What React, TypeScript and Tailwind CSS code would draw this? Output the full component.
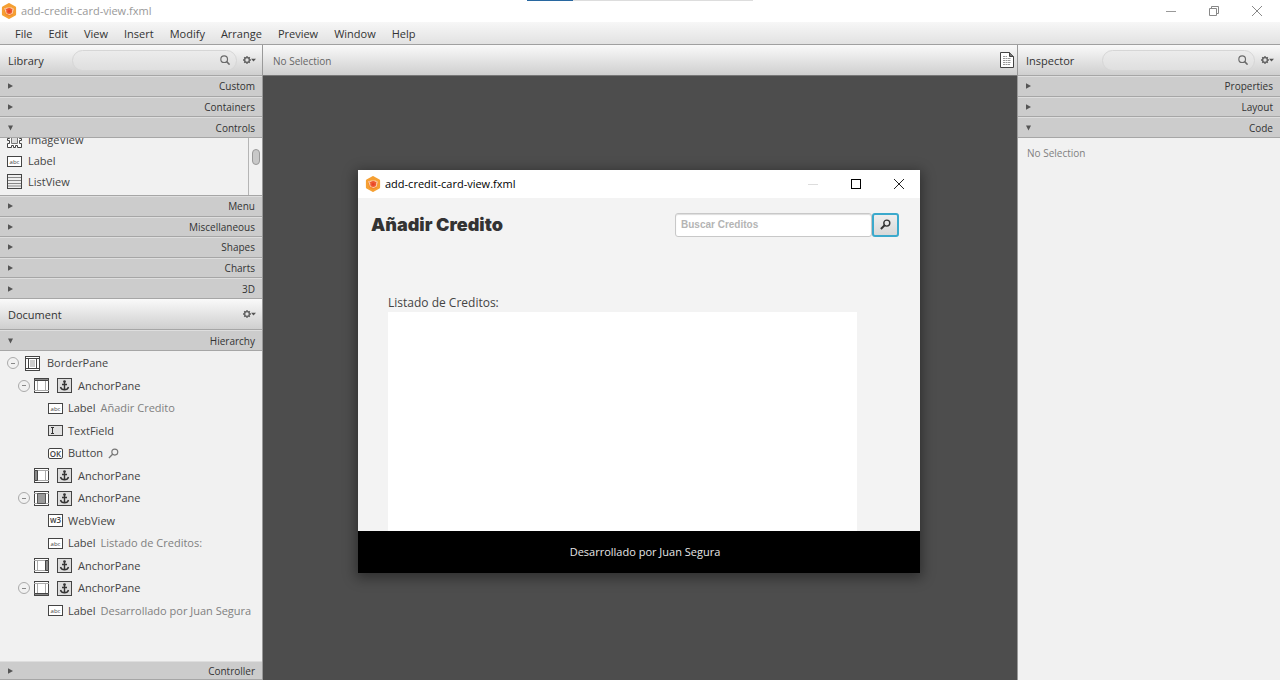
import React from "react";

const Logo = () => (
  <svg width="16" height="16" viewBox="0 0 16 16" aria-hidden="true" className="shrink-0">
    <path d="M8 1.200 13.900 4.500v7L8 14.800 2.100 11.500v-7Z" fill="#f5a033" stroke="#f5a033" strokeWidth="2.400" strokeLinejoin="round" />
    <path d="M3 7 8 4.500 13 7l-1.500 5L8 13.500 4.500 12Z" fill="#f58a2a" />
    <path d="M3.200 5.200 6.500 4.600h4l2.300 1.200-1 4.700L8.500 12 5 10.500Z" fill="#fccfae" />
    <circle cx="8.200" cy="8" r="3" fill="#ee5a30" />
    <path d="m4.500 6 2 .800M9.500 6.800l2-.600" stroke="#ee5a30" strokeWidth="1" />
    <circle cx="8.200" cy="8.200" r="1.200" fill="#e8402a" />
  </svg>
);

const SearchIcon = () => (
  <svg width="10" height="10" viewBox="0 0 12 12" fill="none" stroke="#6a6a6a" strokeWidth="1.4" aria-hidden="true" className="shrink-0">
    <circle cx="5" cy="5" r="4" />
    <path d="m8 8 3.500 3.500" strokeWidth="1.900" />
  </svg>
);

const GearMenu = ({ label }: { label: string }) => (
  <button type="button" aria-label={label} className="flex h-5 w-4 shrink-0 items-center justify-center">
    <svg width="13" height="10" viewBox="0 0 13 10" aria-hidden="true">
      <circle cx="4" cy="5" r="2.400" fill="none" stroke="#666" strokeWidth="1.500" />
      <path d="M4 1v1.500M4 7.500V9M0 5h1.500M6.500 5H8M1.200 2.200l1 1M5.800 6.800l1 1M6.800 2.200l-1 1M2.200 6.800l-1 1" stroke="#666" strokeWidth="1.300" />
      <path d="M8 3.800h5L10.500 6.500Z" fill="#555" />
    </svg>
  </button>
);

const KeyGlass = ({ dark = false }: { dark?: boolean }) => (
  <svg width="11" height="11" viewBox="0 0 11 11" fill="none" stroke={dark ? "#333" : "#777"} aria-hidden="true" className="shrink-0">
    <circle cx="6.800" cy="4.100" r="3" strokeWidth={dark ? 1.4 : 1.1} />
    <path d="M4.600 6.300.9 10" strokeWidth={dark ? 2 : 1.3} />
  </svg>
);

const Section = ({ title, open = false }: { title: string; open?: boolean }) => (
  <button
    type="button"
    aria-expanded={open}
    className="flex w-full items-center justify-between border-t border-b border-t-[#dedede] border-b-[#a6a6a6] bg-[#cccccc] pr-[7px] pl-2 text-[10px] leading-4 text-[#333]"
  >
    <svg width="5" height="6" viewBox="0 0 5 6" fill="#555" aria-hidden="true">
      {open ? <path d="M0 .500h5L2.500 5.500Z" /> : <path d="M0 .300v5.400L5 3Z" />}
    </svg>
    <span>{title}</span>
  </button>
);

const PanelHeader = ({ title, search }: { title: string; search?: string }) => (
  <header className="flex h-[31px] shrink-0 items-center border-b border-[#a6a6a6] bg-linear-to-b from-[#fafafa] to-[#cfcfcf] pr-[5px] pl-2">
    <h2 className={search ? "w-16 pt-0.5 text-[11px] text-[#333]" : "flex-1 pt-0.5 text-[11px] text-[#333]"}>{title}</h2>
    {search && (
      <label className={search}>
        <input aria-label={"Search " + title} className="w-full min-w-0 bg-transparent pl-2 text-[11px] outline-none" />
        <SearchIcon />
      </label>
    )}
    <GearMenu label={title + " menu"} />
  </header>
);

const BaseIcon = ({ children, fill = "#fff" }: { children: React.ReactNode; fill?: string }) => (
  <svg width="15" height="15" viewBox="0 0 15 15" aria-hidden="true" className="shrink-0">
    <rect x=".5" y=".5" width="14" height="14" fill={fill} stroke="#444" />
    {children}
  </svg>
);

type Region = "all" | "top" | "left" | "center" | "right" | "bottom";

const BorderIcon = ({ region }: { region: Region }) => (
  <BaseIcon>
    {region === "all" ? (
      <>
        <path d="M0 2.500h15M0 12.500h15M3.500 2.500v10M11.500 2.500v10" stroke="#444" fill="none" />
        <path d="M5 4h5v7H5Z" fill="#ccc" />
      </>
    ) : (
      <path d="M0 2.500h15M0 12.500h15M3.500 2.500v10M11.500 2.500v10" stroke="#aaa" fill="none" />
    )}
    {region === "top" && <path d="M.500.500h14v2H.500Z" fill="#888" stroke="#444" />}
    {region === "left" && <path d="M.500 2.500h3v10h-3Z" fill="#888" stroke="#444" />}
    {region === "center" && <path d="M3.500 2.500h8v10h-8Z" fill="#999" stroke="#555" />}
    {region === "right" && <path d="M11.500 2.500h3v10h-3Z" fill="#888" stroke="#444" />}
    {region === "bottom" && <path d="M.500 12.500h14v2H.500Z" fill="#888" stroke="#444" />}
  </BaseIcon>
);

const AnchorIcon = () => (
  <BaseIcon fill="#ddd">
    <path d="M7.500 3v9M5 6.500h5M3.500 9c.6 2 2 2.700 4 2.700s3.400-.7 4-2.700" fill="none" stroke="#333" strokeWidth="1.400" />
    <circle cx="7.500" cy="3.500" r="1.300" fill="#333" />
  </BaseIcon>
);

const SmallIcon = ({ text, tall = false, round = false }: { text: string; tall?: boolean; round?: boolean }) => (
  <svg width="15" height={tall ? 13 : 11} viewBox={tall ? "0 0 15 13" : "0 0 15 11"} aria-hidden="true" className="shrink-0">
    <rect x=".5" y=".5" width="14" height={tall ? 12 : 10} rx={round ? 1.5 : 0} fill={text === "I" ? "#e2e2e2" : "#fff"} stroke="#444" />
    {text === "I" ? (
      <path d="M3 2.500h3M3 8.500h3M4.500 2.500v6" stroke="#333" />
    ) : (
      <text
        x="7.500"
        y={tall ? 9 : text === "OK" ? 8.5 : 7.5}
        textAnchor="middle"
        fontFamily="Open Sans, sans-serif"
        fontSize={text === "abc" ? 6 : 8}
        fontWeight={text === "abc" ? 400 : 600}
        fill="#444"
      >
        {text}
      </text>
    )}
  </svg>
);

const ListIcon = () => (
  <BaseIcon fill="#eee">
    <path d="M1 3.500h13M1 6.500h13M1 9.500h13M1 12h13" stroke="#888" />
  </BaseIcon>
);

const ImageIcon = () => (
  <svg width="15" height="15" viewBox="0 0 15 15" fill="none" stroke="#444" aria-hidden="true" className="shrink-0">
    <path d="M.500.500h3v2h8v-2h3v3h-2v2h2v2h-2v3h2v4h-4v-2h-2v2h-2v-2h-2v2h-4v-4h2v-3h-2v-2h2v-2h-2Z" fill="#fff" />
    <path d="M4.500 4.500h6v6h-6Z" fill="#ddd" stroke="#777" />
  </svg>
);

const Toggle = () => (
  <button type="button" aria-label="Collapse" className="flex size-3 shrink-0 items-center justify-center rounded-full border border-[#aaa]">
    <span className="h-px w-1 bg-[#888]" />
  </button>
);

type Node = {
  name: string;
  note?: string;
  region?: Region;
  anchor?: boolean;
  icon?: string;
  toggle?: boolean;
  glass?: boolean;
};

const nodes: Node[] = [
  { name: "AnchorPane", region: "top", anchor: true, toggle: true },
  { name: "Label", note: "Añadir Credito", icon: "abc" },
  { name: "TextField", icon: "I" },
  { name: "Button", icon: "OK", glass: true },
  { name: "AnchorPane", region: "left", anchor: true },
  { name: "AnchorPane", region: "center", anchor: true, toggle: true },
  { name: "WebView", icon: "w3" },
  { name: "Label", note: "Listado de Creditos:", icon: "abc" },
  { name: "AnchorPane", region: "right", anchor: true },
  { name: "AnchorPane", region: "bottom", anchor: true, toggle: true },
  { name: "Label", note: "Desarrollado por Juan Segura", icon: "abc" },
];

const TreeRow = ({ node }: { node: Node }) =>
  node.icon ? (
    <li className="flex items-center gap-[5px] pl-12 whitespace-nowrap">
      <SmallIcon text={node.icon} tall={node.icon === "w3"} round={node.icon === "OK"} />
      <span>{node.name}</span>
      {node.note && <span className="text-[#808080]">{node.note}</span>}
      {node.glass && <KeyGlass />}
    </li>
  ) : (
    <li className="flex items-center pl-[18px]">
      <span className="flex w-4">{node.toggle && <Toggle />}</span>
      <BorderIcon region={node.region ?? "all"} />
      <span className="ml-2 flex">
        <AnchorIcon />
      </span>
      <span className="ml-1.5">{node.name}</span>
    </li>
  );

const menus = ["File", "Edit", "View", "Insert", "Modify", "Arrange", "Preview", "Window", "Help"];

const PreviewWindow = () => (
  <section className="flex h-[403px] w-[562px] shrink-0 flex-col bg-[#f3f3f3] shadow-[0_3px_12px_2px_rgba(0,0,0,0.4)]">
    <header className="flex h-7 shrink-0 items-center bg-white pl-[7px] text-[11px] text-black">
      <Logo />
      <h1 className="ml-1 flex-1">add-credit-card-view.fxml</h1>
      <button type="button" aria-label="Minimize" className="flex h-7 w-[43px] items-center justify-center">
        <span className="h-px w-2.5 bg-[#ddd]" />
      </button>
      <button type="button" aria-label="Maximize" className="flex h-7 w-[43px] items-center justify-center">
        <span className="size-2.5 border border-black" />
      </button>
      <button type="button" aria-label="Close" className="flex h-7 w-[43px] items-center justify-center">
        <svg width="10" height="10" viewBox="0 0 10 10" stroke="#222" aria-hidden="true">
          <path d="m0 0 10 10M10 0 0 10" />
        </svg>
      </button>
    </header>
    <div className="flex items-center justify-between pt-3.5 pr-[21px] pl-[13px]">
      <h2 className="pt-px font-[Inter,sans-serif] text-[18px] leading-6 font-black text-[#333]">Añadir Credito</h2>
      <form className="flex" onSubmit={(e) => e.preventDefault()}>
        <input
          aria-label="Buscar Creditos"
          placeholder="Buscar Creditos"
          className="h-6 w-[197px] rounded-[3px] border border-[#c8c8c8] bg-white px-[5px] font-['Liberation_Sans',sans-serif] text-[10px] font-bold shadow-[inset_0_1px_1px_#ddd] outline-none placeholder:text-[#b4b4b4]"
        />
        <button
          type="submit"
          aria-label="Buscar"
          className="flex h-6 w-[27px] items-center justify-center rounded-[3px] border-2 border-[#3ba9cc] bg-linear-to-b from-[#eee] to-[#d8d8d8]"
        >
          <KeyGlass dark />
        </button>
      </form>
    </div>
    <div className="flex min-h-0 flex-1 flex-col pt-14 pr-[63px] pl-[30px]">
      <p className="pt-px text-[12px] leading-[18px] text-[#444]">Listado de Creditos:</p>
      <div className="flex-1 bg-white" />
    </div>
    <footer className="flex h-[42px] shrink-0 items-center justify-center bg-black pl-3 text-[11px] text-[#e6e6e6]">
      Desarrollado por Juan Segura
    </footer>
  </section>
);

export default function App() {
  return (
    <div className="flex h-screen flex-col overflow-hidden bg-[#f1f1f1] font-['Open_Sans','Noto_Sans',sans-serif] text-[11px] leading-4 text-[#444]">
      <header className="relative flex h-[22px] shrink-0 items-center bg-white pl-px">
        <Logo />
        <span className="ml-1 flex-1 text-[11px] text-[#999]">add-credit-card-view.fxml</span>
        <span className="absolute top-0 left-[527px] flex h-px w-[226px] bg-[#ddd]">
          <span className="w-[46px] bg-[#2867a0]" />
        </span>
        <button type="button" aria-label="Minimize" className="flex w-[43px] justify-center">
          <span className="h-px w-2.5 bg-[#999]" />
        </button>
        <button type="button" aria-label="Restore" className="flex w-[43px] justify-center">
          <svg width="10" height="10" viewBox="0 0 10 10" fill="none" stroke="#888" aria-hidden="true">
            <path d="M.500 2.500h7v7h-7ZM2.500 2.500v-2h7v7h-2" />
          </svg>
        </button>
        <button type="button" aria-label="Close" className="mr-0.5 flex w-[43px] justify-center">
          <svg width="10" height="10" viewBox="0 0 10 10" stroke="#888" aria-hidden="true">
            <path d="m0 0 10 10M10 0 0 10" />
          </svg>
        </button>
      </header>
      <nav className="flex h-[23px] shrink-0 items-center gap-4 border-b border-[#a0a0a0] bg-linear-to-b from-[#f7f7f7] to-[#e2e2e2] pt-px pl-[15px] text-[#333]">
        {menus.map((m) => (
          <button key={m} type="button">
            {m}
          </button>
        ))}
      </nav>
      <div className="flex min-h-0 flex-1">
        <aside className="flex w-[263px] shrink-0 flex-col border-r border-[#999]">
          <PanelHeader
            title="Library"
            search="mr-1 flex h-[21px] flex-1 items-center rounded-full border border-[#d6d6d6] bg-linear-to-b from-[#ececec] to-[#dfdfdf] pr-1.5"
          />
          <div className="grid h-[62px] shrink-0 grid-rows-3">
            <Section title="Custom" />
            <Section title="Containers" />
            <Section title="Controls" open />
          </div>
          <div className="flex h-[58px] shrink-0 overflow-hidden border-b border-[#a6a6a6]">
            <ul className="-mt-2 grid h-[83px] flex-1 grid-rows-4 pl-[7px]">
              <li className="flex items-center gap-1.5"><ImageIcon />ImageView</li>
              <li className="flex items-center gap-1.5"><SmallIcon text="abc" />Label</li>
              <li className="flex items-center gap-1.5"><ListIcon />ListView</li>
              <li className="flex items-center gap-1.5"><BaseIcon>{null}</BaseIcon></li>
            </ul>
            <div className="flex w-3.5 justify-center border-l border-[#b5b5b5] pt-[11px]">
              <span className="h-4 w-2 rounded-full border border-[#999] bg-[#c8c8c8]" />
            </div>
          </div>
          <div className="grid h-[103px] shrink-0 grid-rows-5">
            <Section title="Menu" />
            <Section title="Miscellaneous" />
            <Section title="Shapes" />
            <Section title="Charts" />
            <Section title="3D" />
          </div>
          <PanelHeader title="Document" />
          <div className="grid h-[21px] shrink-0">
            <Section title="Hierarchy" open />
          </div>
          <ul className="mt-px grid h-[270px] shrink-0 grid-rows-12">
            <li className="flex items-center pl-[7px]">
              <Toggle />
              <span className="ml-1.5 flex">
                <BorderIcon region="all" />
              </span>
              <span className="ml-[7px]">BorderPane</span>
            </li>
            {nodes.map((n, i) => (
              <TreeRow key={i} node={n} />
            ))}
          </ul>
          <div className="mt-auto grid h-[19px] shrink-0">
            <Section title="Controller" />
          </div>
        </aside>
        <main className="flex min-w-0 flex-1 flex-col bg-[#4d4d4d]">
          <div className="flex h-[31px] shrink-0 items-center justify-between border-b border-[#777] bg-linear-to-b from-[#fafafa] to-[#cfcfcf] pr-[3px] pl-2.5 text-[10px] text-[#666]">
            <span className="pt-0.5">No Selection</span>
            <svg width="14" height="16" viewBox="0 0 14 16" fill="#fff" stroke="#444" aria-hidden="true">
              <path d="M.500.500h9l4 4v11H.500Z" />
              <path d="M9.500.500v4h4" fill="#777" />
              <path d="M3 4.500h4M3 6.500h8M3 8.500h8M3 10.500h8M3 12.500h7" stroke="#999" strokeDasharray="2 .5" />
            </svg>
          </div>
          <div className="flex flex-1 justify-center overflow-hidden pt-[94px] pr-0.5">
            <PreviewWindow />
          </div>
        </main>
        <aside className="flex w-[263px] shrink-0 flex-col border-l border-[#999]">
          <PanelHeader
            title="Inspector"
            search="mr-1 ml-3 flex h-[21px] flex-1 items-center rounded-full border border-[#d6d6d6] bg-linear-to-b from-[#ececec] to-[#dfdfdf] pr-1.5"
          />
          <div className="grid h-[62px] shrink-0 grid-rows-3">
            <Section title="Properties" />
            <Section title="Layout" />
            <Section title="Code" open />
          </div>
          <p className="px-[9px] py-[7px] text-[10px] text-[#808080]">No Selection</p>
        </aside>
      </div>
    </div>
  );
}
